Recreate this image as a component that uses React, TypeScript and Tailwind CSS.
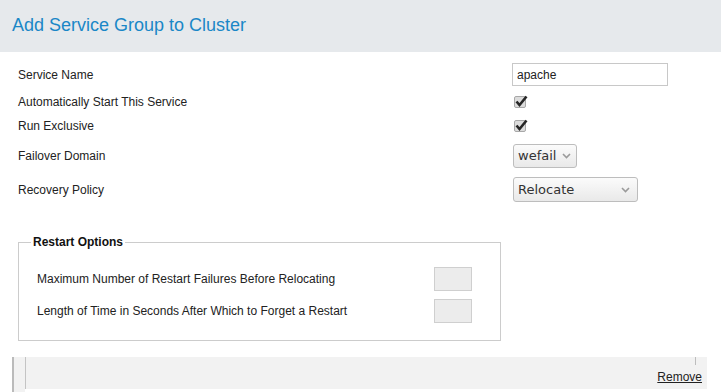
import React from "react";

const Check = () => (
  <svg width="14" height="13" viewBox="0 0 14 13" className="block">
    <rect x="0.5" y="1.5" width="11" height="11" rx="1.5" fill="#dcdcdc" stroke="#a8a8a8" />
    <path d="M2.5 6.5 L5.5 10 L12.5 1.5" fill="none" stroke="#262626" strokeWidth="2.6" strokeLinejoin="miter" />
  </svg>
);

const Chevron = () => (
  <svg width="9" height="6" viewBox="0 0 9 6" className="block">
    <path d="M1 1 L4.5 4.5 L8 1" fill="none" stroke="#9a9a9a" strokeWidth="1.6" />
  </svg>
);

const Row = ({ label, children, cls }: { label: string; children: React.ReactNode; cls: string }) => (
  <div className={`flex items-center ${cls}`}>
    <div className="w-[494px] pl-[18px] text-[12px] text-[#222]">{label}</div>
    <div className="flex items-center">{children}</div>
  </div>
);

export default function App() {
  return (
    <div className="w-[721px] h-[392px] overflow-hidden bg-white font-['Liberation_Sans',Arial,sans-serif]">
      <div className="h-[52px] bg-[#e6e9ec] flex items-center pl-[12px] pb-[1px]">
        <h1 className="text-[18px] text-[#1a87c7]">Add Service Group to Cluster</h1>
      </div>

      <div className="pt-[11px]">
        <Row label="Service Name" cls="h-[23px]">
          <div className="ml-[18px] w-[156px] h-[23px] border border-[#c8c8c8] flex items-center pl-[4px] text-[12px] text-[#222]">
            apache
          </div>
        </Row>
        <Row label="Automatically Start This Service" cls="mt-[4px] h-[23px]">
          <div className="ml-[20px]"><Check /></div>
        </Row>
        <Row label="Run Exclusive" cls="mt-[1px] h-[23px]">
          <div className="ml-[20px]"><Check /></div>
        </Row>
        <Row label="Failover Domain" cls="mt-[6px] h-[25px]">
          <div className="ml-[19px] w-[64px] h-[24px] rounded-[3px] border border-[#bdbdbd] bg-gradient-to-b from-[#fbfbfb] to-[#e9e9e9] flex items-center justify-between pl-[4px] pr-[5px] font-['DejaVu_Sans',sans-serif] text-[13px] text-[#333]">
            <span>wefail</span>
            <Chevron />
          </div>
        </Row>
        <Row label="Recovery Policy" cls="mt-[9px] h-[25px]">
          <div className="ml-[19px] w-[125px] h-[25px] rounded-[3px] border border-[#bdbdbd] bg-gradient-to-b from-[#fbfbfb] to-[#e9e9e9] flex items-center justify-between pl-[4px] pr-[7px] font-['DejaVu_Sans',sans-serif] text-[13px] text-[#333]">
            <span>Relocate</span>
            <Chevron />
          </div>
        </Row>
      </div>

      <fieldset className="mt-[33px] ml-[18px] w-[483px] border border-[#cccccc] pl-[12px] pr-[28px] pt-[18px] pb-[17px]">
        <legend className="px-[2px] text-[12px] leading-[14px] font-bold text-[#111]">Restart Options</legend>
        <div className="pl-[6px] flex flex-col gap-[8px]">
          <div className="flex items-center justify-between h-[24px]">
            <span className="text-[12px] text-[#222]">Maximum Number of Restart Failures Before Relocating</span>
            <div className="w-[38px] h-[24px] bg-[#ececec] border border-[#cfcfcf]" />
          </div>
          <div className="flex items-center justify-between h-[24px]">
            <span className="text-[12px] text-[#222]">Length of Time in Seconds After Which to Forget a Restart</span>
            <div className="w-[38px] h-[24px] bg-[#ececec] border border-[#cfcfcf]" />
          </div>
        </div>
      </fieldset>

      <div className="mt-[16px] ml-[12px] mr-[14px] flex items-start">
        <div className="w-[13px] h-[40px] border-l-2 border-[#bbbbbb] bg-[#f2f2f2]" />
        <div className="flex-1 h-[32px] border-l border-[#c4c4c4] bg-[#f2f2f2] flex flex-col items-end pr-[5px]">
          <div className="w-px h-[8px] bg-[#bdbdbd] mr-[6px]" />
          <a className="mt-[5px] text-[12px] leading-[14px] text-[#222] underline cursor-pointer">Remove</a>
        </div>
      </div>
    </div>
  );
}
